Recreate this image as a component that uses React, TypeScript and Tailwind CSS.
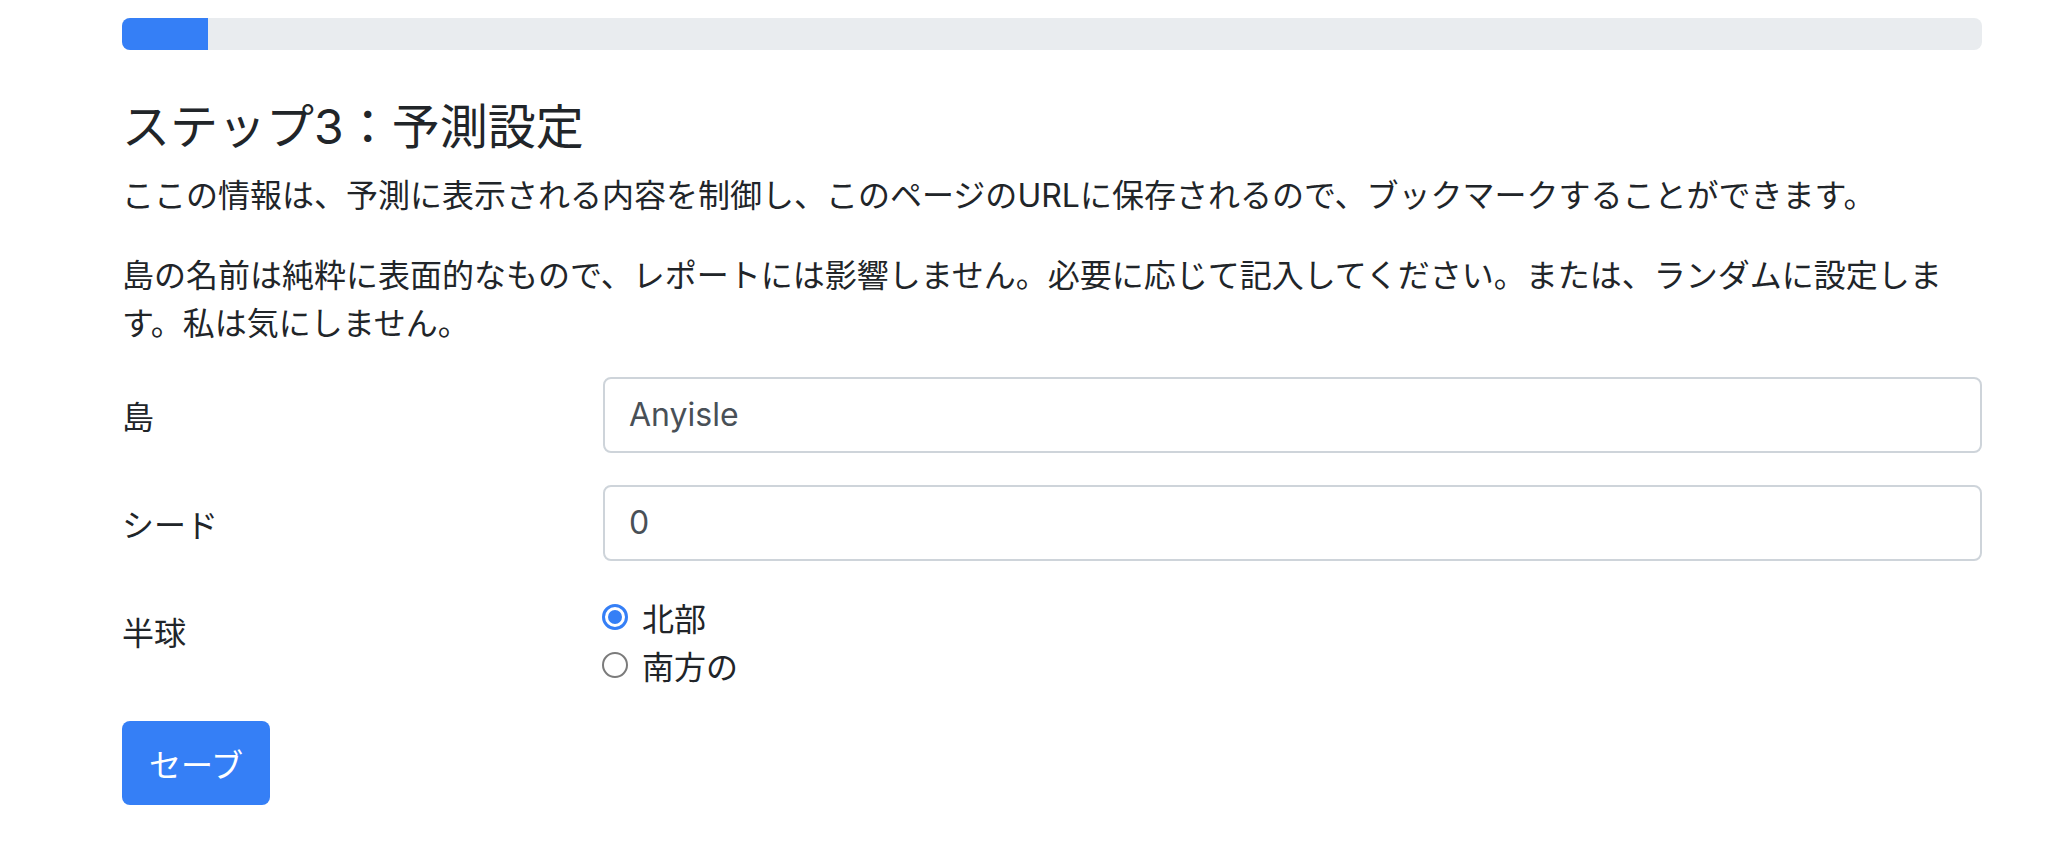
import React from "react";

function Radio({ checked, label }: { checked: boolean; label: string }) {
  return (
    <label className="flex h-[48px] items-center text-[32px] leading-[48px]">
      {checked ? (
        <span className="ml-[-1px] flex h-[26px] w-[26px] shrink-0 items-center justify-center rounded-full border-[3px] border-[#357ff6] bg-white">
          <span className="h-[14px] w-[14px] rounded-full bg-[#357ff6]" />
        </span>
      ) : (
        <span className="ml-[-1px] h-[26px] w-[26px] shrink-0 rounded-full border-[2px] border-[#7b7b7b] bg-white" />
      )}
      <span className="ml-[14px]">{label}</span>
    </label>
  );
}

function Field({ label, value }: { label: string; value: string }) {
  return (
    <div className="mb-[32px] flex">
      <label className="w-[481px] shrink-0 pt-[14px] text-[32px] leading-[48px]">{label}</label>
      <input
        className="h-[76px] min-w-0 flex-1 rounded-[8px] border-[2px] border-[#ced4da] bg-white px-[24px] text-[32px] text-[#495057] outline-none [font-family:Inter,'Noto_Sans_CJK_JP',sans-serif]"
        defaultValue={value}
        readOnly
      />
    </div>
  );
}

export default function App() {
  return (
    <div className="min-h-[854px] w-full bg-white">
      <div className="ml-[122px] w-[1860px] pt-[18px] pb-[40px] text-[#212529] [font-family:'Noto_Sans_CJK_JP',sans-serif]">
        <div className="flex h-[32px] w-full overflow-hidden rounded-[8px] bg-[#e9ecef]">
          <div className="h-full w-[86px] bg-[#357ff6]" />
        </div>

        <h4 className="mt-[45px] mb-[16px] text-[48px] leading-[57.6px] font-normal">
          ステップ<span className="leading-[40px] [font-family:Inter,sans-serif]">3</span>：予測設定
        </h4>

        <p className="mb-[32px] text-[32px] leading-[48px]">
          ここの情報は、予測に表示される内容を制御し、このページの
          <span className="leading-[36px] [font-family:Inter,sans-serif]">URL</span>
          に保存されるので、ブックマークすることができます。
        </p>

        <p className="mb-[32px] text-[32px] leading-[48px]">
          島の名前は純粋に表面的なもので、レポートには影響しません。必要に応じて記入してください。または、ランダムに設定します。私は気にしません。
        </p>

        <form onSubmit={(e) => e.preventDefault()}>
          <Field label="島" value="Anyisle" />
          <Field label="シード" value="0" />

          <div className="mb-[32px] flex">
            <div className="w-[481px] shrink-0 pt-[14px] text-[32px] leading-[48px]">半球</div>
            <div className="flex flex-col">
              <Radio checked label="北部" />
              <Radio checked={false} label="南方の" />
            </div>
          </div>

          <button
            type="submit"
            className="flex h-[84px] w-[148px] items-center justify-center rounded-[8px] bg-[#357ff6] text-[32px] leading-[48px] text-white"
          >
            セーブ
          </button>
        </form>
      </div>
    </div>
  );
}
